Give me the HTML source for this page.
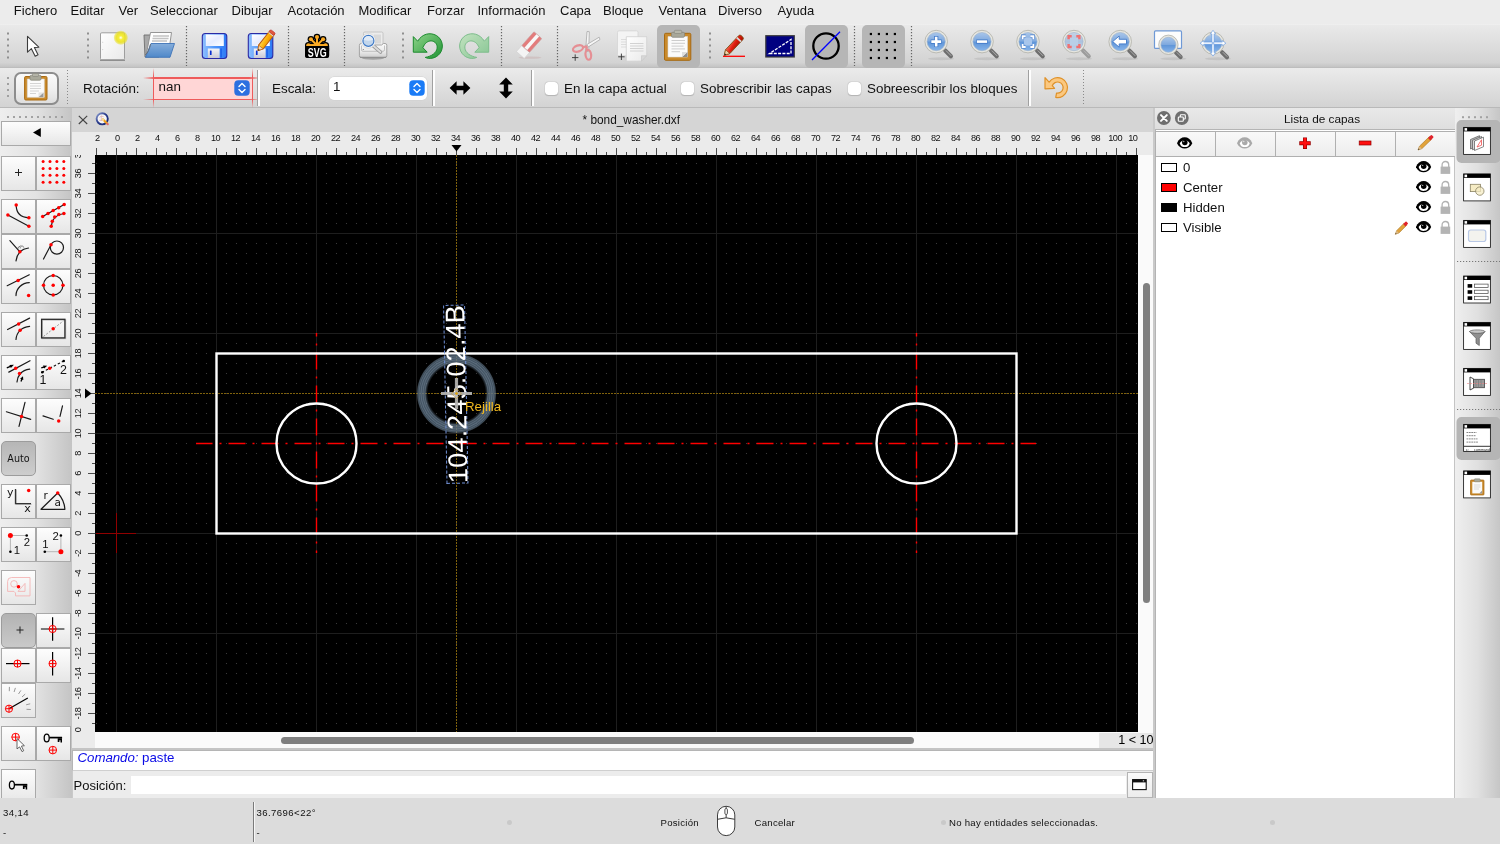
<!DOCTYPE html>
<html lang="es"><head><meta charset="utf-8"><title>bond_washer.dxf</title>
<style>
*{box-sizing:border-box;margin:0;padding:0}
html,body{width:1500px;height:844px;overflow:hidden;background:#dcdcdc;font-family:"Liberation Sans",sans-serif;font-size:13px;color:#000}
.abs{position:absolute}
div,span,svg{position:absolute}
#menubar{left:0;top:0;width:1500px;height:24px;background:#ececec}
#menubar span{top:2px;font-size:13px;line-height:17px;white-space:nowrap;color:#111}
#tb1{left:0;top:24px;width:1500px;height:44px;background:linear-gradient(#f1f1f1 0,#e9e9e9 1.500px,#d3d3d3 90%,#c4c4c4);border-bottom:1px solid #bdbdbd}
#tb2{left:0;top:68px;width:1500px;height:40px;background:linear-gradient(#ebebeb,#d3d3d3);border-bottom:1px solid #b9b9b9}
.vsep{width:1px;top:4px;height:36px;background:repeating-linear-gradient(#8a8a8a 0 1px,transparent 1px 3px)}
.hdl{width:2px;top:10px;height:26px;background:repeating-linear-gradient(transparent 0 4px,#a0a0a0 4px 6px)}
.pressed{background:#b5b5b5;border-radius:5px}
#leftdock{left:0;top:108px;width:72px;height:690px;background:linear-gradient(90deg,#eeeeee,#e2e2e2 50%,#c4c4c4)}
.lb{width:35px;height:35px;border:1px solid #a9a9a9;background:linear-gradient(#fdfdfd,#f3f3f3 45%,#e6e6e6);overflow:hidden}
.lb svg{left:-.4px;top:-.6px}
#mdi{left:72px;top:108px;width:1082px;height:24px;background:#d5d5d5}
#rulerh{left:72px;top:132px;width:1082px;height:23px;background:#ebebeb}
#rulerv{left:72px;top:155px;width:23px;height:577px;background:#ebebeb;overflow:hidden}
#canvas{left:95px;top:155px;width:1043px;height:577px;background:#000;overflow:hidden}
#vscroll{left:1138px;top:155px;width:16px;height:577px;background:#fafafa}
#hscroll{left:72px;top:732px;width:1082px;height:16px;background:#fafafa}
#cmdarea{left:72px;top:748px;width:1082px;height:50px;background:#e4e4e4}
#rpanel{left:1154px;top:108px;width:301px;height:690px;background:#fff}
#rtool{left:1455px;top:108px;width:45px;height:690px;background:linear-gradient(90deg,#efefef,#e0e0e0 50%,#c6c6c6)}
#status{left:0;top:798px;width:1500px;height:46px;background:#dcdcdc;font-size:9.6px}
.rl{top:0;width:31px;height:12px;line-height:12px;font-size:9.2px;text-align:center;letter-spacing:-0.5px;color:#111}
.rv{left:-9px;width:31px;height:31px;line-height:31px;font-size:9.2px;text-align:center;letter-spacing:-0.5px;color:#111;transform:rotate(-90deg)}
.t2{top:13.200px;font-size:13.4px;line-height:16px;white-space:nowrap;color:#111}
.cb{top:14px;width:13px;height:13px;background:#fff;border-radius:3.5px;box-shadow:0 0 1px rgba(0,0,0,.35),0 .5px 1px rgba(0,0,0,.15)}
.st{font-size:9.600px;line-height:12px;letter-spacing:.270px;white-space:nowrap;color:#111}
.sd{top:21.500px;width:5px;height:5px;border-radius:50%;background:#c9c9c9}
body>div{will-change:transform}

</style></head>
<body>
<!-- menubar -->
<div id="menubar">
<span style="left:13.800px">Fichero</span><span style="left:70.500px">Editar</span><span style="left:118.500px">Ver</span><span style="left:150px">Seleccionar</span><span style="left:231.500px">Dibujar</span><span style="left:287.500px">Acotación</span><span style="left:358.500px">Modificar</span><span style="left:427px">Forzar</span><span style="left:477.500px">Información</span><span style="left:560px">Capa</span><span style="left:603px">Bloque</span><span style="left:658.500px">Ventana</span><span style="left:718px">Diverso</span><span style="left:777.500px">Ayuda</span>
</div>

<!-- toolbar1 -->
<div id="tb1">
<svg width="1500" height="44" viewBox="0 24 1500 44" style="left:0;top:0">
<defs>
<linearGradient id="gpage" x1="0" y1="0" x2="1" y2="1"><stop offset="0" stop-color="#ffffff"/><stop offset="1" stop-color="#e9e9e9"/></linearGradient>
<radialGradient id="gglow"><stop offset="0" stop-color="#ffffff"/><stop offset=".28" stop-color="#f6ee3a"/><stop offset=".62" stop-color="#ebe224" stop-opacity=".92"/><stop offset=".85" stop-color="#e8df1e" stop-opacity=".55"/><stop offset="1" stop-color="#e8df1e" stop-opacity="0"/></radialGradient>
<linearGradient id="gfold" x1="0" y1="0" x2="0" y2="1"><stop offset="0" stop-color="#86aedb"/><stop offset="1" stop-color="#4f88c9"/></linearGradient>
<linearGradient id="gsave" x1="0" y1="0" x2="1" y2="0"><stop offset="0" stop-color="#8fc0ff"/><stop offset=".5" stop-color="#4f96fb"/><stop offset="1" stop-color="#2c7af5"/></linearGradient>
<linearGradient id="glabel" x1="0" y1="0" x2="1" y2="1"><stop offset="0" stop-color="#ffffff"/><stop offset=".5" stop-color="#e6ecff"/><stop offset="1" stop-color="#ffffff"/></linearGradient>
<linearGradient id="gshut" x1="0" y1="0" x2="0" y2="1"><stop offset="0" stop-color="#f4f4f8"/><stop offset="1" stop-color="#c9c9d4"/></linearGradient>
<linearGradient id="gundo" x1="0" y1="0" x2="1" y2="1"><stop offset="0" stop-color="#8fd48a"/><stop offset="1" stop-color="#1f9434"/></linearGradient>
<linearGradient id="gredo" x1="1" y1="0" x2="0" y2="1"><stop offset="0" stop-color="#c3e3c0"/><stop offset="1" stop-color="#86c593"/></linearGradient>
<linearGradient id="glens" x1="0" y1="0" x2="0" y2="1"><stop offset="0" stop-color="#a9c6ea"/><stop offset=".48" stop-color="#7fa9de"/><stop offset=".52" stop-color="#5f95d8"/><stop offset="1" stop-color="#86b4ea"/></linearGradient>
<linearGradient id="glensd" x1="0" y1="0" x2="0" y2="1"><stop offset="0" stop-color="#c5d3e6"/><stop offset=".5" stop-color="#adc2de"/><stop offset="1" stop-color="#bfd2ea"/></linearGradient>
<linearGradient id="gprn" x1="0" y1="0" x2="0" y2="1"><stop offset="0" stop-color="#fbfbfb"/><stop offset=".6" stop-color="#e9e9e9"/><stop offset="1" stop-color="#cdcdcd"/></linearGradient>
<linearGradient id="gpen" x1="0" y1="0" x2="1" y2="1"><stop offset="0" stop-color="#ffe36a"/><stop offset=".5" stop-color="#fdb40d"/><stop offset="1" stop-color="#e98a00"/></linearGradient>
<linearGradient id="gpenr" x1="0" y1="0" x2="1" y2="1"><stop offset="0" stop-color="#ff7a66"/><stop offset=".5" stop-color="#e0200f"/><stop offset="1" stop-color="#a80d00"/></linearGradient>
</defs>
<rect x="7" y="32.5" width="2" height="2" fill="#8f8f8f"/><rect x="7" y="38.5" width="2" height="2" fill="#8f8f8f"/><rect x="7" y="44.5" width="2" height="2" fill="#8f8f8f"/><rect x="7" y="50.5" width="2" height="2" fill="#8f8f8f"/><rect x="7" y="56.5" width="2" height="2" fill="#8f8f8f"/>
<rect x="87" y="32.5" width="2" height="2" fill="#8f8f8f"/><rect x="87" y="38.5" width="2" height="2" fill="#8f8f8f"/><rect x="87" y="44.5" width="2" height="2" fill="#8f8f8f"/><rect x="87" y="50.5" width="2" height="2" fill="#8f8f8f"/><rect x="87" y="56.5" width="2" height="2" fill="#8f8f8f"/>
<rect x="402" y="32.5" width="2" height="2" fill="#8f8f8f"/><rect x="402" y="38.5" width="2" height="2" fill="#8f8f8f"/><rect x="402" y="44.5" width="2" height="2" fill="#8f8f8f"/><rect x="402" y="50.5" width="2" height="2" fill="#8f8f8f"/><rect x="402" y="56.5" width="2" height="2" fill="#8f8f8f"/>
<rect x="709" y="32.5" width="2" height="2" fill="#8f8f8f"/><rect x="709" y="38.5" width="2" height="2" fill="#8f8f8f"/><rect x="709" y="44.5" width="2" height="2" fill="#8f8f8f"/><rect x="709" y="50.5" width="2" height="2" fill="#8f8f8f"/><rect x="709" y="56.5" width="2" height="2" fill="#8f8f8f"/>
<path d="M186.5 26V66" stroke="#666" stroke-width="1.2" stroke-dasharray="1.2 1.8"/>
<path d="M288.5 26V66" stroke="#666" stroke-width="1.2" stroke-dasharray="1.2 1.8"/>
<path d="M344.5 26V66" stroke="#666" stroke-width="1.2" stroke-dasharray="1.2 1.8"/>
<path d="M501.5 26V66" stroke="#666" stroke-width="1.2" stroke-dasharray="1.2 1.8"/>
<path d="M557.5 26V66" stroke="#666" stroke-width="1.2" stroke-dasharray="1.2 1.8"/>
<path d="M854.5 26V66" stroke="#666" stroke-width="1.2" stroke-dasharray="1.2 1.8"/>
<path d="M911.5 26V66" stroke="#666" stroke-width="1.2" stroke-dasharray="1.2 1.8"/>
<rect x="657" y="25" width="43" height="43" rx="5" fill="#b6b6b6"/>
<rect x="805" y="25" width="43" height="43" rx="5" fill="#b6b6b6"/>
<rect x="862" y="25" width="43" height="43" rx="5" fill="#b6b6b6"/>
<path d="M27.5 36.300V52.200L31.400 48.700L35.200 56.200L38 54.800L34.400 47.500L38.800 47.200Z" fill="#fff" stroke="#3c3c3c" stroke-width="1.100" stroke-linejoin="round"/>
<rect x="100.500" y="32.800" width="24" height="27" rx="1.200" fill="url(#gpage)" stroke="#9e9e9e" stroke-width="1"/><path d="M100 60.300h25" stroke="#8a8a8a" stroke-width="1.200"/><path d="M102.200 42.300h1M102.200 49.600h1" stroke="#c4c4c4" stroke-width=".8"/><circle cx="120.800" cy="37.700" r="7.400" fill="url(#gglow)"/>
<path d="M144 35h6l1 1.500h8V57h-14z" fill="#a9a9a9" stroke="#6e6e6e" stroke-width=".9" stroke-linejoin="round"/><path d="M150.500 32.500h21l-3 21h-22z" fill="#fdfdfd" stroke="#8a8a8a" stroke-width=".9" stroke-linejoin="round"/><path d="M153 36h16M152.500 38.500h16M152 41h15" stroke="#c2c2c2" stroke-width="1.600"/><path d="M151 43.500h23.500l-4.500 13.800h-24.500z" fill="url(#gfold)" stroke="#3f74b8" stroke-width=".9" stroke-linejoin="round"/><path d="M145 55c3-2 4.500-6 5.500-11" stroke="#6a6a6a" stroke-width=".8" fill="none"/>
<rect x="202.3" y="33.500" width="24.500" height="25" rx="3" fill="url(#gsave)" stroke="#2a2aa5" stroke-width="1.100"/><rect x="205.8" y="34.500" width="18" height="11.500" fill="url(#glabel)"/><rect x="207.8" y="48.500" width="11.800" height="9.500" fill="url(#gshut)"/><rect x="209.9" y="50.500" width="1.700" height="4.500" rx=".5" fill="#0a2fd0"/><rect x="220.3" y="48.500" width="1.600" height="9" fill="#1f63ea"/>
<rect x="248.3" y="33.500" width="24.500" height="25" rx="3" fill="url(#gsave)" stroke="#2a2aa5" stroke-width="1.100"/><rect x="251.8" y="34.500" width="18" height="11.500" fill="url(#glabel)"/><rect x="253.8" y="48.500" width="11.800" height="9.500" fill="url(#gshut)"/><rect x="255.9" y="50.500" width="1.700" height="4.500" rx=".5" fill="#0a2fd0"/><rect x="266.3" y="48.500" width="1.600" height="9" fill="#1f63ea"/>
<g transform="translate(258 50.700) rotate(-52) scale(1.05 1.35)"><path d="M0 0l4.500-2.200h17.500v4.400h-17.500z" fill="url(#gpen)" stroke="#b8560a" stroke-width=".7" stroke-linejoin="round"/><path d="M0 0l4.500-2.200v4.400z" fill="#f3d9b0" stroke="#b8560a" stroke-width=".5"/><path d="M0 0l1.600-.8v1.600z" fill="#333"/><path d="M19.500-2.200h1.200v4.400h-1.200z" fill="#d8d8d8"/><path d="M20.700-2.200h1.800a.8.800 0 0 1 .8.800v2.800a.8.800 0 0 1-.8.800h-1.800z" fill="#e2583d" stroke="#b33" stroke-width=".5"/></g>
<path d="M317 45.300L308.50 45.30" stroke="#000" stroke-width="4.400" stroke-linecap="round"/><circle cx="308.50" cy="45.30" r="3.300" fill="#000"/><path d="M317 45.300L310.92 39.22" stroke="#000" stroke-width="4.400" stroke-linecap="round"/><circle cx="310.92" cy="39.22" r="3.300" fill="#000"/><path d="M317 45.300L317.00 37.00" stroke="#000" stroke-width="4.400" stroke-linecap="round"/><circle cx="317.00" cy="37.00" r="3.300" fill="#000"/><path d="M317 45.300L323.08 39.22" stroke="#000" stroke-width="4.400" stroke-linecap="round"/><circle cx="323.08" cy="39.22" r="3.300" fill="#000"/><path d="M317 45.300L325.50 45.30" stroke="#000" stroke-width="4.400" stroke-linecap="round"/><circle cx="325.50" cy="45.30" r="3.300" fill="#000"/>
<rect x="305" y="42.800" width="24.100" height="15.300" rx="3" fill="#000"/>
<path d="M317 45.300L308.50 45.30" stroke="#fbab25" stroke-width="2" stroke-linecap="round"/><circle cx="308.50" cy="45.30" r="2.050" fill="#fbab25"/><path d="M317 45.300L310.92 39.22" stroke="#fbab25" stroke-width="2" stroke-linecap="round"/><circle cx="310.92" cy="39.22" r="2.050" fill="#fbab25"/><path d="M317 45.300L317.00 37.00" stroke="#fbab25" stroke-width="2" stroke-linecap="round"/><circle cx="317.00" cy="37.00" r="2.050" fill="#fbab25"/><path d="M317 45.300L323.08 39.22" stroke="#fbab25" stroke-width="2" stroke-linecap="round"/><circle cx="323.08" cy="39.22" r="2.050" fill="#fbab25"/><path d="M317 45.300L325.50 45.30" stroke="#fbab25" stroke-width="2" stroke-linecap="round"/><circle cx="325.50" cy="45.30" r="2.050" fill="#fbab25"/>
<circle cx="317" cy="45.300" r="2.600" fill="#fbab25"/>
<path d="M306.500 45.100h21" stroke="#fbab25" stroke-width="1.700"/>
<rect x="305" y="46" width="24.100" height="12.100" rx="2.500" fill="#000"/><rect x="305" y="46" width="24.100" height="5" fill="#000"/>
<text x="317.200" y="56.800" text-anchor="middle" font-family="Liberation Sans, sans-serif" font-weight="bold" font-size="12.800" fill="#fff" textLength="18.800" lengthAdjust="spacingAndGlyphs">SVG</text>
<ellipse cx="373" cy="58.200" rx="11" ry="1.600" fill="#777" fill-opacity=".55"/><rect x="363.500" y="32" width="19.500" height="14" rx="1.300" fill="#ececec" stroke="#bdbdbd" stroke-width=".8"/><rect x="374" y="34.500" width="7" height="9" fill="#d9d9d9"/><path d="M362 43.500h8l2 1.500h9.500l2-1.500h1.500q1.800 0 1.800 1.800v10.400q0 1.800-1.800 1.800h-23.800q-1.800 0-1.800-1.800v-10.400q0-1.800 1.800-1.800z" fill="url(#gprn)" stroke="#9c9c9c" stroke-width=".9"/><path d="M361.500 45.500v4.300q0 1.500 1.500 1.500h20q1.500 0 1.500-1.500v-4.300" fill="none" stroke="#b4b4b4" stroke-width=".8"/><circle cx="363.300" cy="49.500" r=".6" fill="#777"/><path d="M360 57.300h26" stroke="#8c8c8c" stroke-width="1"/><path d="M373.300 45.800l7.200 6.200" stroke="#9a9a9a" stroke-width="3.600" stroke-linecap="round"/><path d="M373.300 45.800l7.200 6.200" stroke="#dcdcdc" stroke-width="1.800" stroke-linecap="round"/><circle cx="368.400" cy="40.900" r="7.300" fill="#fafafa" stroke="#c8c8c8" stroke-width=".6"/><circle cx="368.400" cy="40.900" r="5.500" fill="#c2d6ec" stroke="#3f7ac6" stroke-width="1.200"/><path d="M363.600 39.800a4.900 4.900 0 0 1 9.600 0q-4.800 2-9.600 0z" fill="#e6eff9" fill-opacity=".85"/>
<path d="M413.300 36.600L413.300 52.200L427.200 52.200L422.900 47.700C424.500 43.300 427.800 40.800 431.200 40.900C435 41 437.600 44.300 437.100 48.200C436.500 52.600 432 56.300 425.200 57.400C429.500 59.400 436.300 58.500 440.100 53.200C444.200 47.400 442.600 39.200 436.400 35.500C430 31.900 422 33.900 417.700 41.200Z" fill="url(#gundo)" stroke="#1c8a2e" stroke-width="1" stroke-linejoin="round"/>
<g transform="translate(902 0) scale(-1 1)"><path d="M413.300 36.600L413.300 52.200L427.200 52.200L422.900 47.700C424.500 43.300 427.800 40.800 431.200 40.900C435 41 437.600 44.300 437.100 48.200C436.500 52.600 432 56.300 425.200 57.400C429.500 59.400 436.300 58.500 440.100 53.200C444.200 47.400 442.600 39.200 436.400 35.500C430 31.900 422 33.900 417.700 41.200Z" fill="url(#gredo)" stroke="#7dbd8c" stroke-width="1" stroke-linejoin="round"/></g>
<ellipse cx="530" cy="57.600" rx="11.500" ry="1.200" fill="#c9b4b4" fill-opacity=".6"/><g transform="translate(521 54.200) rotate(-48.500)"><rect x="-1" y="-5.200" width="8" height="10.400" fill="#f4f4f4" stroke="#cfcfcf" stroke-width=".6"/><rect x="7" y="-5.200" width="18.500" height="10.400" rx=".8" fill="#e37c7c"/><rect x="7" y="-1.700" width="18.500" height="3.600" fill="#f8f8f8"/><rect x="7" y="-5.200" width="18.500" height="10.400" rx=".8" fill="none" stroke="#c9a0a0" stroke-width=".6"/></g>
<path d="M587 31.500l2.300.2-.6 19.500-3.200.8z" fill="#f6f6f6" stroke="#a8a8a8" stroke-width=".8" stroke-linejoin="round"/><path d="M599.200 37.200l.8 2.300-11.500 7.300-1.700-2.200z" fill="#f6f6f6" stroke="#a8a8a8" stroke-width=".8" stroke-linejoin="round"/><ellipse cx="578" cy="48.500" rx="5.200" ry="3" transform="rotate(-18 578 48.500)" fill="none" stroke="#e58f94" stroke-width="2.200"/><ellipse cx="588.300" cy="54.800" rx="2.800" ry="5" transform="rotate(-8 588.300 54.800)" fill="none" stroke="#e58f94" stroke-width="2.200"/><path d="M582.500 47.500l4.500-1.500M586.500 50l.5-4" stroke="#e58f94" stroke-width="2.200"/><path d="M572 57.600h6.400M575.200 54.400v6.400" stroke="#333" stroke-width=".9"/>
<rect x="617.500" y="30.800" width="20.500" height="25" rx="1.500" fill="#f4f4f4" stroke="#d4d4d4" stroke-width=".8"/><path d="M621 39.500h6M621 42h6M621 44.500h6M621 47h6" stroke="#dcdcdc" stroke-width="1"/><path d="M626.300 36.700h20.400v19l-5.200 5.500h-15.200z" fill="url(#gpage)" stroke="#cfcfcf" stroke-width=".8" stroke-linejoin="round"/><path d="M646.700 55.700l-5.200 5.500v-5.500z" fill="#d8d8d8" stroke="#c4c4c4" stroke-width=".6"/><path d="M630 43.500h13.500M630 46h13.500M630 48.500h13.500M630 51h13.500" stroke="#d2d2d2" stroke-width="1"/><path d="M618.200 56.800h6.400M621.400 53.600v6.400" stroke="#333" stroke-width=".9"/>
<rect x="664.500" y="33.300" width="26.300" height="27" rx="1.200" fill="#c98a2c" stroke="#a76911" stroke-width="1"/><path d="M668 36.500h19.500v20.500h-19.500z" fill="#fbfbfb" stroke="#dadada" stroke-width=".6"/><path d="M687.500 52v5h-5.500z" fill="#8d8d8d"/><path d="M682 57l5.500-5h-5.500z" fill="#dedede"/><path d="M671.500 40.500h13.500M671.500 43.300h13.500M671.500 46.100h12M671.500 48.900h13.500M671.500 51.700h8.500" stroke="#cdcdcd" stroke-width="1"/><rect x="671.500" y="32.300" width="13" height="5" rx="1.200" fill="#a8a89a" stroke="#84847a" stroke-width=".7"/><rect x="674.300" y="30.300" width="7.400" height="3.200" rx="1" fill="#b7b7aa" stroke="#84847a" stroke-width=".6"/>
<path d="M723 56.300h22" stroke="#ff0000" stroke-width="1.300"/><g transform="translate(724.300 55.300) rotate(-47)"><path d="M0 0l5-2.900h19a2 2 0 0 1 2 2v1.800a2 2 0 0 1-2 2h-19z" fill="url(#gpenr)" stroke="#7a4a10" stroke-width=".8" stroke-linejoin="round"/><path d="M0 0l5-2.900v5.800z" fill="#f0d2a8" stroke="#7a4a10" stroke-width=".6"/><path d="M0 0l1.900-1.100v2.200z" fill="#222"/><path d="M20.500-2.900h1.800v5.800h-1.800z" fill="#d9d9d9"/></g>
<rect x="765.800" y="35.700" width="28.500" height="21.300" fill="#000080" stroke="#3c3c3c" stroke-width="1.200"/><path d="M769.500 53.500h21.500V39.500z" fill="none" stroke="#fff" stroke-width="1.300" stroke-dasharray="3 1.300"/>
<circle cx="826" cy="46" r="12.700" fill="none" stroke="#000" stroke-width="2.300"/><path d="M812 60L840 31.700" stroke="#0000ff" stroke-width="1.300"/>
<rect x="869.8" y="32.9" width="2.200" height="2.200" fill="#000"/><rect x="869.8" y="40.9" width="2.200" height="2.200" fill="#000"/><rect x="869.8" y="48.9" width="2.200" height="2.200" fill="#000"/><rect x="869.8" y="56.9" width="2.200" height="2.200" fill="#000"/><rect x="877.8" y="32.9" width="2.200" height="2.200" fill="#000"/><rect x="877.8" y="40.9" width="2.200" height="2.200" fill="#000"/><rect x="877.8" y="48.9" width="2.200" height="2.200" fill="#000"/><rect x="877.8" y="56.9" width="2.200" height="2.200" fill="#000"/><rect x="885.8" y="32.9" width="2.200" height="2.200" fill="#000"/><rect x="885.8" y="40.9" width="2.200" height="2.200" fill="#000"/><rect x="885.8" y="48.9" width="2.200" height="2.200" fill="#000"/><rect x="885.8" y="56.9" width="2.200" height="2.200" fill="#000"/><rect x="893.8" y="32.9" width="2.200" height="2.200" fill="#000"/><rect x="893.8" y="40.9" width="2.200" height="2.200" fill="#000"/><rect x="893.8" y="48.9" width="2.200" height="2.200" fill="#000"/><rect x="893.8" y="56.9" width="2.200" height="2.200" fill="#000"/>
<ellipse cx="941.2" cy="58.800" rx="13" ry="1.500" fill="#888" fill-opacity=".22"/><path d="M945.2 50.6l5.7 5.7" stroke="#6e6e6e" stroke-width="4.200" stroke-linecap="round"/><path d="M946.2 50.800000000000004l4.8 4.8" stroke="#b9b9b9" stroke-width="1" stroke-linecap="round" stroke-opacity=".8"/><circle cx="936.2" cy="41.6" r="11.3" fill="#e6e6e0" stroke="#a9a9a0" stroke-width=".7"/><circle cx="936.2" cy="41.6" r="9.100000000000001" fill="url(#glens)" stroke="#9ab0cb" stroke-width=".6"/><path d="M930.700 41.600h11M936.200 36.100v11" stroke="#3f78c8" stroke-width="4.200"/><path d="M931.300 41.600h9.800M936.200 36.700v9.800" stroke="#fff" stroke-width="2.600"/>
<ellipse cx="987" cy="58.800" rx="13" ry="1.500" fill="#888" fill-opacity=".22"/><path d="M991 50.6l5.7 5.7" stroke="#6e6e6e" stroke-width="4.200" stroke-linecap="round"/><path d="M992 50.800000000000004l4.8 4.8" stroke="#b9b9b9" stroke-width="1" stroke-linecap="round" stroke-opacity=".8"/><circle cx="982" cy="41.6" r="11.3" fill="#e6e6e0" stroke="#a9a9a0" stroke-width=".7"/><circle cx="982" cy="41.6" r="9.100000000000001" fill="url(#glens)" stroke="#9ab0cb" stroke-width=".6"/><path d="M976.300 41.600h11.400" stroke="#3f78c8" stroke-width="4.200"/><path d="M976.900 41.600h10.200" stroke="#fff" stroke-width="2.600"/>
<ellipse cx="1033" cy="58.800" rx="13" ry="1.500" fill="#888" fill-opacity=".22"/><path d="M1037 50.6l5.7 5.7" stroke="#6e6e6e" stroke-width="4.200" stroke-linecap="round"/><path d="M1038 50.800000000000004l4.8 4.8" stroke="#b9b9b9" stroke-width="1" stroke-linecap="round" stroke-opacity=".8"/><circle cx="1028" cy="41.6" r="11.3" fill="#e6e6e0" stroke="#a9a9a0" stroke-width=".7"/><circle cx="1028" cy="41.6" r="9.100000000000001" fill="url(#glens)" stroke="#9ab0cb" stroke-width=".6"/><rect x="1024" y="37.600" width="8" height="8" fill="#a8c6ec"/><path d="M1022.6 39.300000000000004V36.2H1025.7M1030.3 36.2H1033.4V39.300000000000004M1033.4 43.9V47.0H1030.3M1025.7 47.0H1022.6V43.9" fill="none" stroke="#3f78c8" stroke-width="3.2"/><path d="M1022.6 39.300000000000004V36.2H1025.7M1030.3 36.2H1033.4V39.300000000000004M1033.4 43.9V47.0H1030.3M1025.7 47.0H1022.6V43.9" fill="none" stroke="#fff" stroke-width="1.9"/>
<ellipse cx="1079" cy="58.800" rx="13" ry="1.500" fill="#888" fill-opacity=".22"/><path d="M1083 50.6l5.7 5.7" stroke="#9c9c9c" stroke-width="4.200" stroke-linecap="round"/><path d="M1084 50.800000000000004l4.8 4.8" stroke="#b9b9b9" stroke-width="1" stroke-linecap="round" stroke-opacity=".8"/><circle cx="1074" cy="41.6" r="11.3" fill="#e6e6e0" stroke="#a9a9a0" stroke-width=".7"/><circle cx="1074" cy="41.6" r="9.100000000000001" fill="url(#glensd)" stroke="#9ab0cb" stroke-width=".6"/><rect x="1070" y="37.600" width="8" height="8" fill="#b9cfe8"/><path d="M1068.6 39.300000000000004V36.2H1071.7M1076.3 36.2H1079.4V39.300000000000004M1079.4 43.9V47.0H1076.3M1071.7 47.0H1068.6V43.9" fill="none" stroke="#f07070" stroke-width="2.4"/>
<ellipse cx="1125.2" cy="58.800" rx="13" ry="1.500" fill="#888" fill-opacity=".22"/><path d="M1129.2 50.6l5.7 5.7" stroke="#6e6e6e" stroke-width="4.200" stroke-linecap="round"/><path d="M1130.2 50.800000000000004l4.8 4.8" stroke="#b9b9b9" stroke-width="1" stroke-linecap="round" stroke-opacity=".8"/><circle cx="1120.2" cy="41.6" r="11.3" fill="#e6e6e0" stroke="#a9a9a0" stroke-width=".7"/><circle cx="1120.2" cy="41.6" r="9.100000000000001" fill="url(#glens)" stroke="#9ab0cb" stroke-width=".6"/><path d="M1112.700 41.600l6.500-5.600v3.300h7.300v4.600h-7.300v3.300z" fill="#fff" stroke="#3f78c8" stroke-width=".9" stroke-linejoin="round"/>
<rect x="1154.500" y="30.900" width="27" height="17.500" rx="1" fill="#fdfdfd" stroke="#6f99d6" stroke-width="1.200"/>
<ellipse cx="1173.4" cy="58.800" rx="13" ry="1.500" fill="#888" fill-opacity=".22"/><path d="M1176.0 52.4l4.6 4.6" stroke="#6e6e6e" stroke-width="4.200" stroke-linecap="round"/><path d="M1177.0 52.6l3.6999999999999997 3.6999999999999997" stroke="#b9b9b9" stroke-width="1" stroke-linecap="round" stroke-opacity=".8"/><circle cx="1168.4" cy="44.8" r="9.7" fill="#e6e6e0" stroke="#a9a9a0" stroke-width=".7"/><circle cx="1168.4" cy="44.8" r="7.499999999999999" fill="url(#glens)" stroke="#9ab0cb" stroke-width=".6"/>
<ellipse cx="1218" cy="58.800" rx="13" ry="1.500" fill="#888" fill-opacity=".22"/><path d="M1222 52.2l5 5" stroke="#6e6e6e" stroke-width="4.200" stroke-linecap="round"/><path d="M1223 52.400000000000006l4.1 4.1" stroke="#b9b9b9" stroke-width="1" stroke-linecap="round" stroke-opacity=".8"/><circle cx="1213" cy="43.2" r="11" fill="#e6e6e0" stroke="#a9a9a0" stroke-width=".7"/><circle cx="1213" cy="43.2" r="8.8" fill="url(#glens)" stroke="#9ab0cb" stroke-width=".6"/>
<path d="M1213 30.300l2.700 3.600h-1.600v8.200h8.200v-1.600l3.600 2.700-3.600 2.700v-1.600h-8.200v8.200h1.600l-2.700 3.600-2.700-3.600h1.600v-8.200h-8.200v1.600l-3.600-2.700 3.600-2.700v1.600h8.200v-8.200h-1.600z" fill="#fff" stroke="#5a93e0" stroke-width=".6" stroke-linejoin="round"/><rect x="1211.700" y="41.900" width="2.600" height="2.600" fill="#9cbde9"/>
</svg></div>

<!-- toolbar2 -->
<div id="tb2">
<div class="hdl" style="left:7px;top:5px;height:26px"></div>
<div style="left:14px;top:4px;width:45px;height:33px;border:2px solid #8d8d8d;border-radius:7px;background:linear-gradient(#fafafa,#f0f0f0 50%,#dedede)"></div>
<svg width="28" height="30" viewBox="0 0 28 30" style="left:22px;top:4px">
<rect x="2.600" y="4.500" width="22.400" height="23.500" rx="1.200" fill="#c98a2c" stroke="#a96a12" stroke-width="1"/>
<path d="M5.300 7h17v18.300h-17z" fill="#fbfbfb" stroke="#d8d8d8" stroke-width=".6"/>
<path d="M21.5 20.5v4.500h-5z" fill="#9a9a9a"/><path d="M16.5 25l5-4.500h-5z" fill="#e4e4e4"/>
<path d="M8 11.500h11M8 14h11M8 16.500h11M8 19h9M8 21.500h6" stroke="#cfcfcf" stroke-width=".9"/>
<rect x="8" y="3.200" width="11" height="5" rx="1.200" fill="#a9a99b" stroke="#85857a" stroke-width=".7"/>
<rect x="10.5" y="1.500" width="6" height="3" rx="1" fill="#b4b4a8" stroke="#85857a" stroke-width=".6"/>
</svg>
<div class="vsep" style="left:67px;top:2px;height:35px"></div>
<span class="t2" style="left:83px">Rotación:</span>
<div style="left:153px;top:9px;width:99px;height:23px;background:#ffd6d6;border-radius:4px"></div>
<div style="left:143px;top:9px;width:118px;height:1.5px;background:linear-gradient(90deg,rgba(240,80,80,0),#ee5b5b 10%,#ee5b5b 90%,rgba(240,80,80,0))"></div>
<div style="left:143px;top:30.5px;width:118px;height:1.5px;background:linear-gradient(90deg,rgba(240,80,80,0),#ee5b5b 10%,#ee5b5b 90%,rgba(240,80,80,0))"></div>
<div style="left:152.5px;top:0;width:1.5px;height:40px;background:linear-gradient(rgba(240,80,80,0),#ee5b5b 20%,#ee5b5b 80%,rgba(240,80,80,0))"></div>
<div style="left:251.5px;top:0;width:1.5px;height:40px;background:linear-gradient(rgba(240,80,80,0),#ee5b5b 20%,#ee5b5b 80%,rgba(240,80,80,0))"></div>
<span class="t2" style="left:158.500px;top:11.300px">nan</span>
<svg width="16" height="16" viewBox="0 0 16 16" style="left:234px;top:12px"><rect x=".3" y=".3" width="15.4" height="15.4" rx="4" fill="#2d6fe0"/><path d="M5 6.500l3-3 3 3M5 9.500l3 3 3-3" stroke="#fff" stroke-width="1.400" fill="none" stroke-linecap="round" stroke-linejoin="round"/></svg>
<div style="left:257.3px;top:2px;width:.6px;height:36px;background:#a0a0a0"></div><div style="left:258px;top:2px;width:1.800px;height:36px;background:#fefefe"></div>
<span class="t2" style="left:272px">Escala:</span>
<div style="left:329px;top:9px;width:98px;height:23px;background:#fff;border-radius:5px;box-shadow:0 0 0 .5px #d0d0d0"></div>
<span class="t2" style="left:333px;top:11.300px">1</span>
<svg width="16" height="16" viewBox="0 0 16 16" style="left:409px;top:12px"><rect x=".3" y=".3" width="15.4" height="15.4" rx="4" fill="#1a7bf6"/><path d="M5 6.500l3-3 3 3M5 9.500l3 3 3-3" stroke="#fff" stroke-width="1.400" fill="none" stroke-linecap="round" stroke-linejoin="round"/></svg>
<div style="left:432.3px;top:2px;width:.6px;height:36px;background:#a0a0a0"></div><div style="left:433px;top:2px;width:1.800px;height:36px;background:#fefefe"></div>
<svg width="22" height="16" viewBox="0 0 22 16" style="left:449px;top:12px"><path d="M.6 8l7-6.800v4.600h6.800v-4.600l7 6.800-7 6.800v-4.600h-6.800v4.600z" fill="#000"/></svg>
<svg width="16" height="22" viewBox="0 0 16 22" style="left:498px;top:9px"><path d="M8 .6l6.800 7h-4.600v6.800h4.600l-6.800 7-6.800-7h4.600v-6.800h-4.600z" fill="#000"/></svg>
<div style="left:531.3px;top:2px;width:.6px;height:36px;background:#a0a0a0"></div><div style="left:532px;top:2px;width:1.800px;height:36px;background:#fefefe"></div>
<div class="cb" style="left:545px"></div><span class="t2" style="left:564px">En la capa actual</span>
<div class="cb" style="left:681px"></div><span class="t2" style="left:700px">Sobrescribir las capas</span>
<div class="cb" style="left:848px"></div><span class="t2" style="left:867px">Sobreescribir los bloques</span>
<div style="left:1028.3px;top:2px;width:.6px;height:36px;background:#a0a0a0"></div><div style="left:1029px;top:2px;width:1.800px;height:36px;background:#fefefe"></div>
<svg width="28" height="26" viewBox="0 0 28 26" style="left:1043px;top:8px"><path d="M2 1.600L2 12.800L11.600 12.300L9.240 9.680A5.600 5.600 0 1 1 13.530 17.110L12.760 21.450A10 10 0 1 0 6.110 6.150Z" fill="#fbc880" stroke="#df9128" stroke-width="1.200" stroke-linejoin="round"/></svg>
<div class="vsep" style="left:1083px;top:2px;height:35px"></div>
</div>

<!-- leftdock -->
<div id="leftdock">
<div style="left:7px;top:8px;width:58px;height:2px;background:repeating-linear-gradient(90deg,#a2a2a2 0 2px,transparent 2px 6px)"></div>
<div class="lb" style="left:1px;top:12.500px;width:70px;height:25px"><svg width="68" height="23" viewBox="0 0 68 23"><path d="M31 11.500l7.800-4.500v9z" fill="#000"/></svg></div>
<div class="lb" style="left:1px;top:48px;"><svg width="33" height="33" viewBox="0 0 33 33"><path d="M13 16.500h7M16.500 13v7" stroke="#222" stroke-width="1"/></svg></div>
<div class="lb" style="left:36px;top:48px;"><svg width="33" height="33" viewBox="0 0 33 33"><circle cx="6.1" cy="5.5" r="1.5" fill="#ff0000"/><circle cx="6.1" cy="12.4" r="1.5" fill="#ff0000"/><circle cx="6.1" cy="19.3" r="1.5" fill="#ff0000"/><circle cx="6.1" cy="26.200000000000003" r="1.5" fill="#ff0000"/><circle cx="13.0" cy="5.5" r="1.5" fill="#ff0000"/><circle cx="13.0" cy="12.4" r="1.5" fill="#ff0000"/><circle cx="13.0" cy="19.3" r="1.5" fill="#ff0000"/><circle cx="13.0" cy="26.200000000000003" r="1.5" fill="#ff0000"/><circle cx="19.9" cy="5.5" r="1.5" fill="#ff0000"/><circle cx="19.9" cy="12.4" r="1.5" fill="#ff0000"/><circle cx="19.9" cy="19.3" r="1.5" fill="#ff0000"/><circle cx="19.9" cy="26.200000000000003" r="1.5" fill="#ff0000"/><circle cx="26.800000000000004" cy="5.5" r="1.5" fill="#ff0000"/><circle cx="26.800000000000004" cy="12.4" r="1.5" fill="#ff0000"/><circle cx="26.800000000000004" cy="19.3" r="1.5" fill="#ff0000"/><circle cx="26.800000000000004" cy="26.200000000000003" r="1.5" fill="#ff0000"/></svg></div>
<div class="lb" style="left:1px;top:91px;"><svg width="33" height="33" viewBox="0 0 33 33"><path d="M14.200 6.100C14.200 14 19 18.500 26.900 18.800M5.900 16L26.900 27.200" stroke="#1a1a1a" stroke-width="1.200" fill="none" stroke-linecap="round"/><circle cx="14.2" cy="6.1" r="1.75" fill="#ff0000"/><circle cx="26.9" cy="18.8" r="1.75" fill="#ff0000"/><circle cx="5.9" cy="16" r="1.75" fill="#ff0000"/><circle cx="26.9" cy="27.2" r="1.75" fill="#ff0000"/></svg></div>
<div class="lb" style="left:36px;top:91px;"><svg width="33" height="33" viewBox="0 0 33 33"><path d="M5.700 17.500L27.200 5.600M14.200 27.200C15 20 19 15.500 26.900 14.500" stroke="#1a1a1a" stroke-width="1.200" fill="none" stroke-linecap="round"/><circle cx="5.7" cy="17.5" r="1.75" fill="#ff0000"/><circle cx="11" cy="14.6" r="1.75" fill="#ff0000"/><circle cx="16.2" cy="11.6" r="1.75" fill="#ff0000"/><circle cx="21.7" cy="8.8" r="1.75" fill="#ff0000"/><circle cx="27.2" cy="5.6" r="1.75" fill="#ff0000"/><circle cx="14.2" cy="27.2" r="1.75" fill="#ff0000"/><circle cx="15.3" cy="22.3" r="1.75" fill="#ff0000"/><circle cx="17.7" cy="18" r="1.75" fill="#ff0000"/><circle cx="21.9" cy="15.4" r="1.75" fill="#ff0000"/><circle cx="26.9" cy="14.5" r="1.75" fill="#ff0000"/></svg></div>
<div class="lb" style="left:1px;top:126px;"><svg width="33" height="33" viewBox="0 0 33 33"><path d="M7.900 6.600L17.900 17.800M17.900 17.800C20.500 15.500 23 14.500 26.500 14M17.900 17.800C15.500 20.500 14.500 23.500 14 26.800" stroke="#1a1a1a" stroke-width="1.200" fill="none" stroke-linecap="round"/><path d="M15.600 15.200a3.600 3.600 0 0 1 6.600-1.600" stroke="#444" stroke-width=".7" fill="none"/><circle cx="18.200" cy="13.800" r=".5" fill="#333"/><circle cx="17.9" cy="17.8" r="1.75" fill="#ff0000"/></svg></div>
<div class="lb" style="left:36px;top:126px;"><svg width="33" height="33" viewBox="0 0 33 33"><circle cx="19.900" cy="13.600" r="6.600" stroke="#1a1a1a" stroke-width="1.200" fill="none" stroke-linecap="round"/><path d="M14 10.800L6.500 25" stroke="#1a1a1a" stroke-width="1.200" fill="none" stroke-linecap="round"/><circle cx="14" cy="10.8" r="1.75" fill="#ff0000"/></svg></div>
<div class="lb" style="left:1px;top:161px;"><svg width="33" height="33" viewBox="0 0 33 33"><path d="M5.200 16.700L27.300 5.800M14 26.600C14 19.500 20 13.800 27.300 13.600" stroke="#1a1a1a" stroke-width="1.200" fill="none" stroke-linecap="round"/><circle cx="16.1" cy="11.4" r="1.75" fill="#ff0000"/><circle cx="26.6" cy="26.4" r="1.75" fill="#ff0000"/></svg></div>
<div class="lb" style="left:36px;top:161px;"><svg width="33" height="33" viewBox="0 0 33 33"><circle cx="16.200" cy="16.200" r="9.700" stroke="#1a1a1a" stroke-width="1.200" fill="none" stroke-linecap="round"/><circle cx="16.2" cy="16.2" r="1.75" fill="#ff0000"/><circle cx="16.2" cy="6.5" r="1.75" fill="#ff0000"/><circle cx="16.2" cy="26" r="1.75" fill="#ff0000"/><circle cx="6.5" cy="16.2" r="1.75" fill="#ff0000"/><circle cx="26" cy="16.2" r="1.75" fill="#ff0000"/></svg></div>
<div class="lb" style="left:1px;top:204px;"><svg width="33" height="33" viewBox="0 0 33 33"><path d="M5.600 17.500L27.600 6.100M14 27.500C14.500 20 20 15 27.600 14.400" stroke="#1a1a1a" stroke-width="1.200" fill="none" stroke-linecap="round"/><circle cx="16.6" cy="11.9" r="1.75" fill="#ff0000"/><circle cx="18.1" cy="18.2" r="1.75" fill="#ff0000"/></svg></div>
<div class="lb" style="left:36px;top:204px;"><svg width="33" height="33" viewBox="0 0 33 33"><rect x="5.300" y="8" width="23.300" height="18.600" fill="none" stroke="#bdbdbd" stroke-width="1.200"/><rect x="4.600" y="7.300" width="23.300" height="18.600" fill="none" stroke="#2a2a2a" stroke-width="1.300"/><path d="M6.500 24.500L26.500 8.800" stroke="#8a8a8a" stroke-width=".9" stroke-dasharray="2 1.500"/><circle cx="16.2" cy="16.8" r="1.75" fill="#ff0000"/></svg></div>
<div class="lb" style="left:1px;top:247px;"><svg width="33" height="33" viewBox="0 0 33 33"><path d="M6.800 17.100L28 5.700M15 26.900C15 22 19 15 27.700 14.200" stroke="#1a1a1a" stroke-width="1.200" fill="none" stroke-linecap="round"/><path d="M4.800 12.900L9 11.100" stroke="#000" stroke-width="1.300"/><path d="M11.900 9.800L7.400 9.900L8.900 13z" fill="#000"/><path d="M19 26.400L20 23.700" stroke="#000" stroke-width="1.300"/><path d="M21 21.200L18.100 23.800L21.300 25z" fill="#000"/><circle cx="13.7" cy="13.2" r="1.75" fill="#ff0000"/><circle cx="17.5" cy="18.6" r="1.75" fill="#ff0000"/></svg></div>
<div class="lb" style="left:36px;top:247px;"><svg width="33" height="33" viewBox="0 0 33 33"><path d="M4.800 17.400L26.700 6" stroke="#111" stroke-width="1.100" stroke-dasharray="2.500 2"/><circle cx="26.700" cy="6" r="1.300" fill="#000"/><circle cx="5.300" cy="17.300" r="1.300" fill="#000"/><path d="M4.300 12.900L7.500 11.800" stroke="#000" stroke-width="1.300"/><path d="M10.200 10.800L6 10.500L7.200 13.600z" fill="#000"/><circle cx="12.7" cy="13.2" r="1.75" fill="#ff0000"/><text x="26.5" y="19.3" text-anchor="middle" font-family="Liberation Sans, sans-serif" font-size="12.42" fill="#111">2</text><text x="6" y="28.8" text-anchor="middle" font-family="Liberation Sans, sans-serif" font-size="12.42" fill="#111">1</text></svg></div>
<div class="lb" style="left:1px;top:290px;"><svg width="33" height="33" viewBox="0 0 33 33"><path d="M4.400 13.800L28.700 21.400M23 4.400L17 28.300" stroke="#1a1a1a" stroke-width="1.200" fill="none" stroke-linecap="round"/><circle cx="19.5" cy="18.6" r="1.75" fill="#ff0000"/></svg></div>
<div class="lb" style="left:36px;top:290px;"><svg width="33" height="33" viewBox="0 0 33 33"><path d="M6 17.900L16.200 21.300M25.500 7.900L23 18.300" stroke="#1a1a1a" stroke-width="1.200" fill="none" stroke-linecap="round"/><circle cx="21.7" cy="22.9" r="1.75" fill="#ff0000"/></svg></div>
<div class="lb" style="left:1px;top:376px;"><svg width="33" height="33" viewBox="0 0 33 33"><path d="M14.200 5.700V20.300H29.700" stroke="#c4c4c4" stroke-width="1.200" fill="none"/><path d="M13.500 5V19.600H29" stroke="#333" stroke-width="1.300" fill="none"/><text x="8.2" y="12" text-anchor="middle" font-family="DejaVu Sans, sans-serif" font-size="11.00" fill="#111">y</text><text x="25.6" y="28.2" text-anchor="middle" font-family="DejaVu Sans, sans-serif" font-size="11.00" fill="#111">x</text><circle cx="26.7" cy="6.5" r="1.75" fill="#ff0000"/></svg></div>
<div class="lb" style="left:36px;top:376px;"><svg width="33" height="33" viewBox="0 0 33 33"><path d="M4 25.300L20.700 9M4 25.300H27.900M20.700 9C25.500 14 27.500 19 27.900 25.300" stroke="#1a1a1a" stroke-width="1.200" fill="none" stroke-linecap="round"/><text x="8.7" y="15.3" text-anchor="middle" font-family="DejaVu Sans, sans-serif" font-size="10.50" fill="#111">r</text><text x="20.7" y="22.3" text-anchor="middle" font-family="DejaVu Sans, sans-serif" font-size="10.50" fill="#111">a</text><circle cx="20.7" cy="9" r="1.75" fill="#ff0000"/></svg></div>
<div class="lb" style="left:1px;top:419px;"><svg width="33" height="33" viewBox="0 0 33 33"><path d="M8.400 24.700V8.500H24.700" stroke="#b5b5b5" stroke-width="1" fill="none"/><circle cx="24.700" cy="8.500" r="1.300" fill="#000"/><circle cx="8.400" cy="24.700" r="1.300" fill="#000"/><circle cx="8.4" cy="8.5" r="2.5" fill="#ff0000"/><text x="25" y="19.3" text-anchor="middle" font-family="Liberation Sans, sans-serif" font-size="11.34" fill="#111">2</text><text x="14.8" y="27.3" text-anchor="middle" font-family="Liberation Sans, sans-serif" font-size="11.34" fill="#111">1</text></svg></div>
<div class="lb" style="left:36px;top:419px;"><svg width="33" height="33" viewBox="0 0 33 33"><path d="M23.900 8.500V24.700H7.800" stroke="#b5b5b5" stroke-width="1" fill="none"/><circle cx="23.900" cy="8.500" r="1.300" fill="#000"/><circle cx="7.800" cy="24.700" r="1.300" fill="#000"/><circle cx="23.9" cy="24.7" r="2.5" fill="#ff0000"/><text x="18.7" y="13.3" text-anchor="middle" font-family="Liberation Sans, sans-serif" font-size="11.34" fill="#111">2</text><text x="8.3" y="21" text-anchor="middle" font-family="Liberation Sans, sans-serif" font-size="11.34" fill="#111">1</text></svg></div>
<div class="lb" style="left:1px;top:462px;"><svg width="33" height="33" viewBox="0 0 33 33"><path d="M9.500 7.500H28V25.900H13.500V23L12 21.400H5.600V11.500Q5.600 7.500 9.500 7.500z" fill="none" stroke="#f4b4b4" stroke-width=".9"/><circle cx="12" cy="13.900" r="3.300" fill="none" stroke="#f4b4b4" stroke-width=".9"/><path d="M23 13.400V21.400H16z" fill="none" stroke="#f4b4b4" stroke-width=".9"/><circle cx="16.5" cy="16.7" r="1.75" fill="#ff0000"/></svg></div>
<div class="lb" style="left:1px;top:505px;background:linear-gradient(#b3b3b3,#c9c9c9);border-radius:5px;border-color:#9c9c9c;"><svg width="33" height="33" viewBox="0 0 33 33"><path d="M14.500 17h7M18 13.500v7" stroke="#222" stroke-width="1"/></svg></div>
<div class="lb" style="left:36px;top:505px;"><svg width="33" height="33" viewBox="0 0 33 33"><path d="M3.900 16H27.400M15.600 4.300V27.800" stroke="#000" stroke-width="1.200"/><circle cx="15.6" cy="16" r="3.6" fill="none" stroke="#ff0000" stroke-width="1"/><path d="M12.0 16h7.2M15.6 12.4v7.2" stroke="#ff0000" stroke-width="1"/></svg></div>
<div class="lb" style="left:1px;top:540px;"><svg width="33" height="33" viewBox="0 0 33 33"><path d="M4 15.600H27.500" stroke="#000" stroke-width="1.200"/><circle cx="15.5" cy="15.6" r="3.6" fill="none" stroke="#ff0000" stroke-width="1"/><path d="M11.9 15.6h7.2M15.5 12.0v7.2" stroke="#ff0000" stroke-width="1"/></svg></div>
<div class="lb" style="left:36px;top:540px;"><svg width="33" height="33" viewBox="0 0 33 33"><path d="M15.600 3.900V27.600" stroke="#000" stroke-width="1.200"/><circle cx="15.6" cy="15.6" r="3.6" fill="none" stroke="#ff0000" stroke-width="1"/><path d="M12.0 15.6h7.2M15.6 12.0v7.2" stroke="#ff0000" stroke-width="1"/></svg></div>
<div class="lb" style="left:1px;top:575px;"><svg width="33" height="33" viewBox="0 0 33 33"><path d="M7.3 8.2L7.4 3.9M12.1 9.0L13.4 4.9M16.5 11.0L18.9 7.4M20.0 14.0L23.2 11.1M24.1 21.8L28.2 20.8M24.5 26.3L28.8 26.5" stroke="#9a9a9a" stroke-width="1"/><path d="M7 25.700L25.800 15" stroke="#000" stroke-width="1.200"/><circle cx="7" cy="25.7" r="3.6" fill="none" stroke="#ff0000" stroke-width="1"/><path d="M3.4 25.7h7.2M7 22.099999999999998v7.2" stroke="#ff0000" stroke-width="1"/></svg></div>
<div class="lb" style="left:1px;top:618px;"><svg width="33" height="33" viewBox="0 0 33 33"><circle cx="13.6" cy="11.1" r="3.8" fill="none" stroke="#ff0000" stroke-width="1"/><path d="M9.8 11.1h7.6M13.6 7.3v7.6" stroke="#ff0000" stroke-width="1"/><path d="M15 12.500V22.900L17.600 20.900L20 25.600L21.700 24.700L19.400 20.100L22.400 19.700Z" fill="#fff" stroke="#555" stroke-width=".9" stroke-linejoin="round"/></svg></div>
<div class="lb" style="left:36px;top:618px;"><svg width="33" height="33" viewBox="0 0 33 33"><ellipse cx="9.7" cy="12" rx="2.500" ry="3.900" fill="none" stroke="#000" stroke-width="1.300"/><path d="M12.299999999999999 11.6h12.800" stroke="#000" stroke-width="1.700"/><path d="M20.7 12.2h4.300v4.300h-1.500v-2.300h-1.100v1.700h-1.700z" fill="#000"/><circle cx="15.8" cy="24.1" r="3.8" fill="none" stroke="#ff0000" stroke-width="1"/><path d="M12.0 24.1h7.6M15.8 20.3v7.6" stroke="#ff0000" stroke-width="1"/></svg></div>
<div class="lb" style="left:1px;top:661px;"><svg width="33" height="33" viewBox="0 0 33 33"><ellipse cx="9.9" cy="16.1" rx="2.500" ry="3.900" fill="none" stroke="#000" stroke-width="1.300"/><path d="M12.5 15.700000000000001h12.800" stroke="#000" stroke-width="1.700"/><path d="M20.9 16.3h4.300v4.300h-1.500v-2.300h-1.100v1.700h-1.700z" fill="#000"/></svg></div>
<div class="lb" style="left:1px;top:333px;background:linear-gradient(#b6b6b6,#cdcdcd);border-radius:5px;border-color:#9c9c9c;font-family:'DejaVu Sans',sans-serif;font-size:9.600px;line-height:33px;text-align:center;color:#111">Auto</div>
</div>

<!-- mdi -->
<div id="mdi">
<svg width="40" height="24" viewBox="0 0 40 24" style="left:0;top:0"><defs><linearGradient id="gq" x1="0" y1="0" x2="1" y2="1"><stop offset="0" stop-color="#8fa1d3"/><stop offset=".45" stop-color="#2a3c8c"/><stop offset="1" stop-color="#1b2a74"/></linearGradient></defs><path d="M6.800 7.800L15.200 16M15.200 7.800L6.800 16" stroke="#454545" stroke-width="1.150" fill="none"/><circle cx="30.200" cy="10.800" r="5.600" fill="#f6f6f6" stroke="url(#gq)" stroke-width="1.900"/><path d="M27.500 9.500l1.800-1.400 2.300.6M27.300 12.200l2.600.4M29.300 7.800v5" stroke="#d9a0a0" stroke-width=".6" fill="none"/><path d="M30.800 11.300l4.300 4.300" stroke="#f0a21a" stroke-width="2.100" stroke-linecap="round"/><path d="M30.600 11.100l.8.800" stroke="#f6dfa0" stroke-width="1.600" stroke-linecap="round"/><path d="M35.300 15.800l.5.500" stroke="#e06a6a" stroke-width="2" stroke-linecap="round"/></svg>
<span style="left:510.500px;top:4.700px;font-size:11.850px;line-height:14px;white-space:nowrap;color:#111">* bond_washer.dxf</span>
</div>
<div id="rulerh"><div style="left:23px;top:0;width:1043px;height:23px;overflow:hidden">
<svg width="1043" height="23" viewBox="0 0 1043 23" style="left:0;top:0"><path d="M1.5 16V23M11.5 20V23M21.5 16V23M31.5 20V23M41.5 16V23M51.5 20V23M61.5 16V23M71.5 20V23M81.5 16V23M91.5 20V23M101.5 16V23M111.5 20V23M121.5 16V23M131.5 20V23M141.5 16V23M151.5 20V23M161.5 16V23M171.5 20V23M181.5 16V23M191.5 20V23M201.5 16V23M211.5 20V23M221.5 16V23M231.5 20V23M241.5 16V23M251.5 20V23M261.5 16V23M271.5 20V23M281.5 16V23M291.5 20V23M301.5 16V23M311.5 20V23M321.5 16V23M331.5 20V23M341.5 16V23M351.5 20V23M361.5 16V23M371.5 20V23M381.5 16V23M391.5 20V23M401.5 16V23M411.5 20V23M421.5 16V23M431.5 20V23M441.5 16V23M451.5 20V23M461.5 16V23M471.5 20V23M481.5 16V23M491.5 20V23M501.5 16V23M511.5 20V23M521.5 16V23M531.5 20V23M541.5 16V23M551.5 20V23M561.5 16V23M571.5 20V23M581.5 16V23M591.5 20V23M601.5 16V23M611.5 20V23M621.5 16V23M631.5 20V23M641.5 16V23M651.5 20V23M661.5 16V23M671.5 20V23M681.5 16V23M691.5 20V23M701.5 16V23M711.5 20V23M721.5 16V23M731.5 20V23M741.5 16V23M751.5 20V23M761.5 16V23M771.5 20V23M781.5 16V23M791.5 20V23M801.5 16V23M811.5 20V23M821.5 16V23M831.5 20V23M841.5 16V23M851.5 20V23M861.5 16V23M871.5 20V23M881.5 16V23M891.5 20V23M901.5 16V23M911.5 20V23M921.5 16V23M931.5 20V23M941.5 16V23M951.5 20V23M961.5 16V23M971.5 20V23M981.5 16V23M991.5 20V23M1001.5 16V23M1011.5 20V23M1021.5 16V23M1031.5 20V23M1041.5 16V23" stroke="#4c4c4c" stroke-width="1" fill="none"/><path d="M356.5 13h10l-5 6.5z" fill="#000"/></svg>
<span class="rl" style="left:-13.1px">2</span>
<span class="rl" style="left:6.9px">0</span>
<span class="rl" style="left:26.9px">2</span>
<span class="rl" style="left:46.9px">4</span>
<span class="rl" style="left:66.9px">6</span>
<span class="rl" style="left:86.9px">8</span>
<span class="rl" style="left:105px">10</span>
<span class="rl" style="left:125px">12</span>
<span class="rl" style="left:145px">14</span>
<span class="rl" style="left:165px">16</span>
<span class="rl" style="left:185px">18</span>
<span class="rl" style="left:205px">20</span>
<span class="rl" style="left:225px">22</span>
<span class="rl" style="left:245px">24</span>
<span class="rl" style="left:265px">26</span>
<span class="rl" style="left:285px">28</span>
<span class="rl" style="left:305px">30</span>
<span class="rl" style="left:325px">32</span>
<span class="rl" style="left:345px">34</span>
<span class="rl" style="left:365px">36</span>
<span class="rl" style="left:385px">38</span>
<span class="rl" style="left:405px">40</span>
<span class="rl" style="left:425px">42</span>
<span class="rl" style="left:445px">44</span>
<span class="rl" style="left:465px">46</span>
<span class="rl" style="left:485px">48</span>
<span class="rl" style="left:505px">50</span>
<span class="rl" style="left:525px">52</span>
<span class="rl" style="left:545px">54</span>
<span class="rl" style="left:565px">56</span>
<span class="rl" style="left:585px">58</span>
<span class="rl" style="left:605px">60</span>
<span class="rl" style="left:625px">62</span>
<span class="rl" style="left:645px">64</span>
<span class="rl" style="left:665px">66</span>
<span class="rl" style="left:685px">68</span>
<span class="rl" style="left:705px">70</span>
<span class="rl" style="left:725px">72</span>
<span class="rl" style="left:745px">74</span>
<span class="rl" style="left:765px">76</span>
<span class="rl" style="left:785px">78</span>
<span class="rl" style="left:805px">80</span>
<span class="rl" style="left:825px">82</span>
<span class="rl" style="left:845px">84</span>
<span class="rl" style="left:865px">86</span>
<span class="rl" style="left:885px">88</span>
<span class="rl" style="left:905px">90</span>
<span class="rl" style="left:925px">92</span>
<span class="rl" style="left:945px">94</span>
<span class="rl" style="left:965px">96</span>
<span class="rl" style="left:985px">98</span>
<span class="rl" style="left:1004.6px">100</span>
<span class="rl" style="left:1024.6px">102</span>
</div></div>
<div id="rulerv">
<svg width="23" height="577" viewBox="0 0 23 577" style="left:0;top:0"><path d="M20 568.5H23M16 558.5H23M20 548.5H23M16 538.5H23M20 528.5H23M16 518.5H23M20 508.5H23M16 498.5H23M20 488.5H23M16 478.5H23M20 468.5H23M16 458.5H23M20 448.5H23M16 438.5H23M20 428.5H23M16 418.5H23M20 408.5H23M16 398.5H23M20 388.5H23M16 378.5H23M20 368.5H23M16 358.5H23M20 348.5H23M16 338.5H23M20 328.5H23M16 318.5H23M20 308.5H23M16 298.5H23M20 288.5H23M16 278.5H23M20 268.5H23M16 258.5H23M20 248.5H23M16 238.5H23M20 228.5H23M16 218.5H23M20 208.5H23M16 198.5H23M20 188.5H23M16 178.5H23M20 168.5H23M16 158.5H23M20 148.5H23M16 138.5H23M20 128.5H23M16 118.5H23M20 108.5H23M16 98.5H23M20 88.5H23M16 78.5H23M20 68.5H23M16 58.5H23M20 48.5H23M16 38.5H23M20 28.5H23M16 18.5H23M20 8.5H23" stroke="#4c4c4c" stroke-width="1" fill="none"/><path d="M13 233.5v10l6.5 -5z" fill="#000"/></svg>
<span class="rv" style="top:563px">-20</span>
<span class="rv" style="top:543px">-18</span>
<span class="rv" style="top:523px">-16</span>
<span class="rv" style="top:503px">-14</span>
<span class="rv" style="top:483px">-12</span>
<span class="rv" style="top:463px">-10</span>
<span class="rv" style="top:443px">-8</span>
<span class="rv" style="top:423px">-6</span>
<span class="rv" style="top:403px">-4</span>
<span class="rv" style="top:383px">-2</span>
<span class="rv" style="top:363px">0</span>
<span class="rv" style="top:343px">2</span>
<span class="rv" style="top:323px">4</span>
<span class="rv" style="top:303px">6</span>
<span class="rv" style="top:283px">8</span>
<span class="rv" style="top:263px">10</span>
<span class="rv" style="top:243px">12</span>
<span class="rv" style="top:223px">14</span>
<span class="rv" style="top:203px">16</span>
<span class="rv" style="top:183px">18</span>
<span class="rv" style="top:163px">20</span>
<span class="rv" style="top:143px">22</span>
<span class="rv" style="top:123px">24</span>
<span class="rv" style="top:103px">26</span>
<span class="rv" style="top:83px">28</span>
<span class="rv" style="top:63px">30</span>
<span class="rv" style="top:43px">32</span>
<span class="rv" style="top:23px">34</span>
<span class="rv" style="top:3px">36</span>
<span class="rv" style="top:-17px">38</span>
</div>

<!-- canvas -->
<div id="canvas">
<svg width="1043" height="577" viewBox="0 0 1043 577" style="left:0;top:0">
<defs><pattern id="gd" x="1" y="8" width="10" height="10" patternUnits="userSpaceOnUse"><rect x="0" y="0" width="1" height="1" fill="#3b3b3b"/></pattern><radialGradient id="ring" cx="50%" cy="50%" r="50%"><stop offset="0.72" stop-color="#5d7387" stop-opacity="0"/><stop offset="0.79" stop-color="#5d7387" stop-opacity="0.8"/><stop offset="0.9" stop-color="#566b7e" stop-opacity="0.9"/><stop offset="0.965" stop-color="#4c6072" stop-opacity="0.8"/><stop offset="1" stop-color="#4c6072" stop-opacity="0"/></radialGradient></defs>
<rect width="1043" height="577" fill="url(#gd)"/>
<path d="M21.5 0V577M121.5 0V577M221.5 0V577M321.5 0V577M421.5 0V577M521.5 0V577M621.5 0V577M721.5 0V577M821.5 0V577M921.5 0V577M1021.5 0V577M0 478.5H1043M0 378.5H1043M0 278.5H1043M0 178.5H1043M0 78.5H1043" stroke="#1e1e1e" stroke-width="1" fill="none"/>
<path d="M1 378.5H41M21.5 358V398" stroke="#900000" stroke-width="1" fill="none"/>
<path d="M361.5 0V577M0 238.5H1043" stroke="#80620c" stroke-width="1" stroke-dasharray="2 1" fill="none"/>
<path d="M101 288.5H941" stroke="#ff0000" stroke-width="1.4" stroke-dasharray="2 7 17 7" stroke-dashoffset="9.5" fill="none"/>
<path d="M221.5 178V398M821.5 178V398" stroke="#ff0000" stroke-width="1.4" stroke-dasharray="2 7 17 7" stroke-dashoffset="22.5" fill="none"/>
<rect x="121.5" y="198.5" width="800" height="180" stroke="#fff" stroke-width="2.4" fill="none"/>
<circle cx="221.5" cy="288.5" r="40" stroke="#fff" stroke-width="2.4" fill="none"/>
<circle cx="821.5" cy="288.5" r="40" stroke="#fff" stroke-width="2.4" fill="none"/>
<circle cx="361.5" cy="238.5" r="40" fill="url(#ring)" opacity=".9"/>
<circle cx="361.5" cy="238.5" r="31.5" stroke="#b9c6d2" stroke-opacity="0.25" stroke-width="0.7" fill="none"/>
<circle cx="361.5" cy="238.5" r="33.5" stroke="#b9c6d2" stroke-opacity="0.3" stroke-width="0.7" fill="none"/>
<circle cx="361.5" cy="238.5" r="35.5" stroke="#b9c6d2" stroke-opacity="0.3" stroke-width="0.7" fill="none"/>
<circle cx="361.5" cy="238.5" r="37.5" stroke="#b9c6d2" stroke-opacity="0.3" stroke-width="0.7" fill="none"/>
<circle cx="361.5" cy="238.5" r="39" stroke="#b9c6d2" stroke-opacity="0.2" stroke-width="0.7" fill="none"/>
<g transform="translate(372.5 328) rotate(-91.1)"><rect x="0" y="-20.5" width="178" height="21" fill="none" stroke="#6f8fd6" stroke-width="1" stroke-dasharray="3 2"/><text x="0" y="0" font-family="Liberation Sans, sans-serif" font-size="27" fill="#fff" textLength="178" lengthAdjust="spacingAndGlyphs">104.245.02.4B</text></g>
<path d="M346.0 238.5H377.0M361.5 223.0V254.0" stroke="#b2b2b2" stroke-width="3.200" stroke-opacity="0.92" fill="none"/>
<circle cx="361.5" cy="238.5" r="1.300" fill="#e0a000"/><path d="M356.5 238.5L361.5 233.5L366.5 238.5L361.5 243.5Z" fill="none" stroke="#d89a10" stroke-width=".6" stroke-opacity=".8"/>
<text x="370" y="256" font-family="Liberation Sans, sans-serif" font-size="13.300" fill="#f2b91e">Rejilla</text>
</svg></div>
<div id="vscroll"><div style="left:5px;top:128px;width:7px;height:320px;border-radius:4px;background:#7f7f7f"></div></div>
<div id="hscroll"><div style="left:0;top:0;width:23px;height:16px;background:#ebebeb"></div><div style="left:209px;top:5px;width:633px;height:7px;border-radius:4px;background:#7f7f7f"></div><div style="left:1027px;top:1px;width:55px;height:15px;background:#e6e6e6;font-size:12.600px;line-height:15px;text-align:right;padding-right:.5px">1 &lt; 10</div></div>

<!-- rightpanel -->
<div id="rpanel">
<div style="left:0;top:0;width:301px;height:22px;background:linear-gradient(#e9e9e9,#dedede);border-bottom:1px solid #b4b4b4"></div>
<svg width="40" height="22" viewBox="0 0 40 22" style="left:0;top:0"><circle cx="9.900" cy="10" r="6.900" fill="#6f6f6f"/><path d="M7 7.100l5.800 5.800M12.800 7.100l-5.800 5.800" stroke="#fff" stroke-width="2" stroke-linecap="round"/><circle cx="27.800" cy="10" r="6.900" fill="#6f6f6f"/><rect x="26.300" y="6.800" width="5" height="4.200" rx=".8" fill="none" stroke="#fff" stroke-width="1.100"/><rect x="24.300" y="9" width="5" height="4.200" rx=".8" fill="#6f6f6f" stroke="#fff" stroke-width="1.100"/></svg>
<span style="left:0;top:4px;width:336px;text-align:center;font-size:11.800px;line-height:14px;color:#111;white-space:nowrap">Lista de capas</span>
<div style="left:0;top:22px;width:1.500px;height:668px;background:#b4b4b4"></div>
<div style="left:300px;top:48px;width:1px;height:642px;background:#c4c4c4"></div>
<div style="left:1px;top:22.500px;width:300px;height:26px;background:#b0b0b0"></div>
<div style="left:1.5px;top:23.500px;width:59px;height:24px;background:linear-gradient(#f9f9f9,#ededed)"></div>
<div style="left:61.5px;top:23.500px;width:59px;height:24px;background:linear-gradient(#f9f9f9,#ededed)"></div>
<div style="left:121.5px;top:23.500px;width:59px;height:24px;background:linear-gradient(#f9f9f9,#ededed)"></div>
<div style="left:181.5px;top:23.500px;width:59px;height:24px;background:linear-gradient(#f9f9f9,#ededed)"></div>
<div style="left:241.5px;top:23.500px;width:59px;height:24px;background:linear-gradient(#f9f9f9,#ededed)"></div>
<svg width="301" height="26" viewBox="0 0 301 26" style="left:0;top:22px"><g transform="translate(23.300 13)"><path d="M-.3 .2C1.200-3.800 4.300-5.700 7.400-5.700S13.400-3.800 15 .2C13.300 3.900 10.500 5.500 7.400 5.500S1.500 3.900-.3 .2z" fill="#000"/><path d="M2.400 .2C3.600-1.700 5.300-2.700 7.400-2.700s3.800 1 5 2.900C11.600 3.400 9.600 4.100 7.400 4.100S3.400 3.400 2.400 .2z" fill="#fff"/><circle cx="7.500" cy="-.5" r="2.750" fill="#000"/><circle cx="6.500" cy="-1.500" r=".65" fill="#fff" fill-opacity=".75"/></g><g transform="translate(83.300 13)"><path d="M-.3 .2C1.200-3.800 4.300-5.700 7.400-5.700S13.400-3.800 15 .2C13.300 3.900 10.500 5.500 7.400 5.500S1.500 3.900-.3 .2z" fill="#a9a9a9"/><path d="M2.400 .2C3.600-1.700 5.300-2.700 7.400-2.700s3.800 1 5 2.900C11.600 3.400 9.600 4.100 7.400 4.100S3.400 3.400 2.400 .2z" fill="#fff"/><circle cx="7.500" cy="-.5" r="2.750" fill="#a9a9a9"/><circle cx="6.500" cy="-1.500" r=".65" fill="#fff" fill-opacity=".75"/></g><path d="M145.300 13.200h11.400M151 7.500v11.400" stroke="#8e0000" stroke-width="4"/><path d="M145.900 13.200h10.200M151 8.100v10.200" stroke="#ff1010" stroke-width="2.800"/><rect x="205.200" y="11" width="11.800" height="4" fill="#ff1010" stroke="#8e0000" stroke-width=".7"/><g transform="translate(264 20) rotate(-44)"><path d="M0 0l3.800-1.700h13.800v3.400h-13.800z" fill="#e2a33a" stroke="#a8741d" stroke-width=".6"/><path d="M0 0l3.800-1.700v3.400z" fill="#d9b98a"/><path d="M0 0l1.400-.6v1.200z" fill="#333"/><path d="M15.500-1.700h4a.8.800 0 0 1 .8.800v1.800a.8.800 0 0 1-.8.800h-4z" fill="#e0242c"/></g></svg>
<div style="left:7px;top:55.1px;width:16px;height:8.900px;background:#fff;border:1px solid #000"></div>
<span style="left:29px;top:51.5px;font-size:13.200px;line-height:16px;white-space:nowrap;color:#111">0</span>
<svg width="40" height="16" viewBox="0 0 40 16" style="left:261.500px;top:51.0px"><g transform="translate(.2 7.800)"><path d="M-.3 .2C1.200-3.800 4.300-5.700 7.400-5.700S13.400-3.800 15 .2C13.300 3.900 10.500 5.500 7.400 5.500S1.500 3.900-.3 .2z" fill="#000"/><path d="M2.400 .2C3.600-1.700 5.300-2.700 7.400-2.700s3.800 1 5 2.900C11.600 3.400 9.600 4.100 7.400 4.100S3.400 3.400 2.400 .2z" fill="#fff"/><circle cx="7.500" cy="-.5" r="2.750" fill="#000"/><circle cx="6.500" cy="-1.500" r=".65" fill="#fff" fill-opacity=".75"/></g><g transform="translate(24.400 1.200)"><path d="M1.700 7V4.600a3.300 3.300 0 0 1 6.600 0V7" fill="none" stroke="#b2b2b2" stroke-width="1.300"/><rect x=".2" y="6.400" width="9.600" height="7.300" fill="#b4b4b4"/></g></svg>
<div style="left:7px;top:75.1px;width:16px;height:8.900px;background:#ff0000;border:1px solid #000"></div>
<span style="left:29px;top:71.5px;font-size:13.200px;line-height:16px;white-space:nowrap;color:#111">Center</span>
<svg width="40" height="16" viewBox="0 0 40 16" style="left:261.500px;top:71.0px"><g transform="translate(.2 7.800)"><path d="M-.3 .2C1.200-3.800 4.300-5.700 7.400-5.700S13.400-3.800 15 .2C13.300 3.900 10.500 5.500 7.400 5.500S1.500 3.900-.3 .2z" fill="#000"/><path d="M2.400 .2C3.600-1.700 5.300-2.700 7.400-2.700s3.800 1 5 2.900C11.600 3.400 9.600 4.100 7.400 4.100S3.400 3.400 2.400 .2z" fill="#fff"/><circle cx="7.500" cy="-.5" r="2.750" fill="#000"/><circle cx="6.500" cy="-1.500" r=".65" fill="#fff" fill-opacity=".75"/></g><g transform="translate(24.400 1.200)"><path d="M1.700 7V4.600a3.300 3.300 0 0 1 6.600 0V7" fill="none" stroke="#b2b2b2" stroke-width="1.300"/><rect x=".2" y="6.400" width="9.600" height="7.300" fill="#b4b4b4"/></g></svg>
<div style="left:7px;top:95.1px;width:16px;height:8.900px;background:#000;border:1px solid #000"></div>
<span style="left:29px;top:91.5px;font-size:13.200px;line-height:16px;white-space:nowrap;color:#111">Hidden</span>
<svg width="40" height="16" viewBox="0 0 40 16" style="left:261.500px;top:91.0px"><g transform="translate(.2 7.800)"><path d="M-.3 .2C1.200-3.800 4.300-5.700 7.400-5.700S13.400-3.800 15 .2C13.300 3.900 10.500 5.500 7.400 5.500S1.500 3.900-.3 .2z" fill="#000"/><path d="M2.400 .2C3.600-1.700 5.300-2.700 7.400-2.700s3.800 1 5 2.900C11.600 3.400 9.600 4.100 7.400 4.100S3.400 3.400 2.400 .2z" fill="#fff"/><circle cx="7.500" cy="-.5" r="2.750" fill="#000"/><circle cx="6.500" cy="-1.500" r=".65" fill="#fff" fill-opacity=".75"/></g><g transform="translate(24.400 1.200)"><path d="M1.700 7V4.600a3.300 3.300 0 0 1 6.600 0V7" fill="none" stroke="#b2b2b2" stroke-width="1.300"/><rect x=".2" y="6.400" width="9.600" height="7.300" fill="#b4b4b4"/></g></svg>
<div style="left:7px;top:115.1px;width:16px;height:8.900px;background:#fff;border:1px solid #000"></div>
<span style="left:29px;top:111.5px;font-size:13.200px;line-height:16px;white-space:nowrap;color:#111">Visible</span>
<svg width="40" height="16" viewBox="0 0 40 16" style="left:261.500px;top:111.0px"><g transform="translate(.2 7.800)"><path d="M-.3 .2C1.200-3.800 4.300-5.700 7.400-5.700S13.400-3.800 15 .2C13.300 3.900 10.500 5.500 7.400 5.500S1.500 3.900-.3 .2z" fill="#000"/><path d="M2.400 .2C3.600-1.700 5.300-2.700 7.400-2.700s3.800 1 5 2.900C11.600 3.400 9.600 4.100 7.400 4.100S3.400 3.400 2.400 .2z" fill="#fff"/><circle cx="7.500" cy="-.5" r="2.750" fill="#000"/><circle cx="6.500" cy="-1.500" r=".65" fill="#fff" fill-opacity=".75"/></g><g transform="translate(24.400 1.200)"><path d="M1.700 7V4.600a3.300 3.300 0 0 1 6.600 0V7" fill="none" stroke="#b2b2b2" stroke-width="1.300"/><rect x=".2" y="6.400" width="9.600" height="7.300" fill="#b4b4b4"/></g></svg>
<svg width="16" height="16" viewBox="0 0 16 16" style="left:240px;top:111.5px"><g transform="translate(1.300 14.300) rotate(-45)"><path d="M0 0l3.500-1.600h11v3.200h-11z" fill="#e2a33a" stroke="#a8741d" stroke-width=".6"/><path d="M0 0l3.500-1.600v3.200z" fill="#d9b98a"/><path d="M0 0l1.300-.6v1.200z" fill="#333"/><path d="M12.800-1.600h3.200a.8.800 0 0 1 .8.800v1.600a.8.800 0 0 1-.8.800h-3.200z" fill="#e0242c"/></g></svg>
</div>

<!-- righttoolbar -->
<div id="rtool">
<svg width="45" height="690" viewBox="1455 108 45 690" style="left:0;top:0">
<rect x="1462" y="116.200" width="2" height="2" fill="#a2a2a2"/>
<rect x="1468" y="116.200" width="2" height="2" fill="#a2a2a2"/>
<rect x="1474" y="116.200" width="2" height="2" fill="#a2a2a2"/>
<rect x="1480" y="116.200" width="2" height="2" fill="#a2a2a2"/>
<rect x="1486" y="116.200" width="2" height="2" fill="#a2a2a2"/>
<rect x="1456.500" y="120" width="44" height="43" rx="5" fill="#b5b5b5"/>
<rect x="1456.500" y="417" width="44" height="43" rx="5" fill="#b5b5b5"/>
<path d="M1457 261.5H1500" stroke="#777" stroke-width="1.200" stroke-dasharray="1.200 1.800"/>
<path d="M1457 409.5H1500" stroke="#777" stroke-width="1.200" stroke-dasharray="1.200 1.800"/>
<rect x="1463.600" y="127.4" width="26.800" height="27" fill="#fff" stroke="#1a1a1a" stroke-width=".85"/><rect x="1463.600" y="127.4" width="26.800" height="4" fill="#000"/><rect x="1464.500" y="128.1" width="2.600" height="2.600" fill="#fff"/>
<rect x="1463.600" y="173.9" width="26.800" height="27" fill="#fff" stroke="#1a1a1a" stroke-width=".85"/><rect x="1463.600" y="173.9" width="26.800" height="4" fill="#000"/><rect x="1464.500" y="174.6" width="2.600" height="2.600" fill="#fff"/>
<rect x="1463.600" y="220.4" width="26.800" height="27" fill="#fff" stroke="#1a1a1a" stroke-width=".85"/><rect x="1463.600" y="220.4" width="26.800" height="4" fill="#000"/><rect x="1464.500" y="221.1" width="2.600" height="2.600" fill="#fff"/>
<rect x="1463.600" y="276.0" width="26.800" height="27" fill="#fff" stroke="#1a1a1a" stroke-width=".85"/><rect x="1463.600" y="276.0" width="26.800" height="4" fill="#000"/><rect x="1464.500" y="276.70000000000005" width="2.600" height="2.600" fill="#fff"/>
<rect x="1463.600" y="322.4" width="26.800" height="27" fill="#fff" stroke="#1a1a1a" stroke-width=".85"/><rect x="1463.600" y="322.4" width="26.800" height="4" fill="#000"/><rect x="1464.500" y="323.1" width="2.600" height="2.600" fill="#fff"/>
<rect x="1463.600" y="368.4" width="26.800" height="27" fill="#fff" stroke="#1a1a1a" stroke-width=".85"/><rect x="1463.600" y="368.4" width="26.800" height="4" fill="#000"/><rect x="1464.500" y="369.1" width="2.600" height="2.600" fill="#fff"/>
<rect x="1463.600" y="424.4" width="26.800" height="27" fill="#fff" stroke="#1a1a1a" stroke-width=".85"/><rect x="1463.600" y="424.4" width="26.800" height="4" fill="#000"/><rect x="1464.500" y="425.1" width="2.600" height="2.600" fill="#fff"/>
<rect x="1463.600" y="470.9" width="26.800" height="27" fill="#fff" stroke="#1a1a1a" stroke-width=".85"/><rect x="1463.600" y="470.9" width="26.800" height="4" fill="#000"/><rect x="1464.500" y="471.6" width="2.600" height="2.600" fill="#fff"/>
<path d="M1470.500 139.5l9-3.800v9.500l-9 3.800z" fill="#b9b9b9" stroke="#555" stroke-width=".7"/><path d="M1472.500 140.3l9-3.800v9.500l-9 3.800z" fill="#d9d9d9" stroke="#555" stroke-width=".7"/><path d="M1474.500 141l9-3.800v9.500l-9 3.800z" fill="#fff" stroke="#555" stroke-width=".7"/><path d="M1477 147l4.500-7.300v5.500z" fill="none" stroke="#f05050" stroke-width=".8"/>
<rect x="1470.300" y="184.3" width="10.200" height="7.300" fill="#f6ecc4" stroke="#8a8262" stroke-width=".8"/><circle cx="1479.800" cy="191.1" r="4.200" fill="#f6ecc4" fill-opacity=".75" stroke="#8a8262" stroke-width=".8"/>
<rect x="1468.500" y="230" width="17.300" height="11.500" rx="2.200" fill="#f3f3ee" stroke="#b9c9e6" stroke-width="1.200"/>
<rect x="1467.600" y="284.1" width="4.600" height="3.600" fill="#000"/><rect x="1474.600" y="284.1" width="13.500" height="3.400" fill="#fff" stroke="#444" stroke-width=".7"/>
<rect x="1467.600" y="290.20000000000005" width="4.600" height="3.600" fill="#000"/><rect x="1474.600" y="290.20000000000005" width="13.500" height="3.400" fill="#fff" stroke="#444" stroke-width=".7"/>
<rect x="1467.600" y="296.3" width="4.600" height="3.600" fill="#000"/><rect x="1474.600" y="296.3" width="13.500" height="3.400" fill="#fff" stroke="#444" stroke-width=".7"/>
<path d="M1469.500 331.5h15.500l-5.700 6.800v7.200l-3.300-2.300v-4.900z" fill="#8f8f8f" stroke="#5a5a5a" stroke-width=".7" stroke-linejoin="round"/><ellipse cx="1477.250" cy="331.6" rx="7.700" ry="1.700" fill="#c9c9c9" stroke="#5a5a5a" stroke-width=".7"/>
<path d="M1470 377l3.500 1.800v9.400l-3.500 1.800z" fill="#fff" stroke="#333" stroke-width=".9"/><rect x="1473.500" y="379.3" width="11" height="8.400" fill="#9a9a9a" stroke="#444" stroke-width=".8"/><path d="M1476 379.3v8.400M1478.500 379.3v8.400M1481 379.3v8.400" stroke="#777" stroke-width=".6"/><path d="M1467 383.5h21" stroke="#f08080" stroke-width=".6" stroke-dasharray="2 1"/>
<path d="M1466.500 432.5h10M1466.500 435.7h9M1466.500 438.9h11M1466.500 442.1h11.500" stroke="#777" stroke-width=".9" stroke-dasharray="1.800 .6"/><path d="M1464 446.3h26.500" stroke="#000" stroke-width=".8"/><text x="1482" y="451" text-anchor="middle" font-family="Liberation Sans, sans-serif" font-size="3.600" fill="#222">command</text><text x="1467.500" y="451" text-anchor="middle" font-family="Liberation Sans, sans-serif" font-size="3.600" fill="#222">c:</text>
<rect x="1470.500" y="480.0" width="13.500" height="15" rx=".8" fill="#c98a2c" stroke="#a76911" stroke-width=".7"/><rect x="1472.300" y="481.8" width="9.900" height="11.600" fill="#fafafa"/><path d="M1474 485.0h6.500M1474 487.0h6.500M1474 489.0h5" stroke="#ccc" stroke-width=".7"/><rect x="1474.300" y="478.8" width="5.900" height="3" rx=".7" fill="#a8a89a" stroke="#84847a" stroke-width=".5"/><path d="M1482.200 490.5v2.900h-3z" fill="#999"/>
</svg></div>

<!-- cmd -->
<div id="cmdarea">
<div style="left:0;top:0;width:1082px;height:2px;background:#c4c4c4"></div>
<div style="left:0;top:1.500px;width:1082px;height:21.500px;background:#fff;border-top:1px solid #b5b5b5;border-left:1px solid #b5b5b5;border-bottom:1px solid #cfcfcf"></div>
<span style="left:5.500px;top:2.200px;font-size:13.300px;line-height:16px;white-space:nowrap;color:#0a0ae6;letter-spacing:-.050px"><i>Comando:</i> paste</span>
<div style="left:0;top:23px;width:1082px;height:27px;background:#ececec;border-left:1px solid #c9c9c9"></div>
<span style="left:1.500px;top:30px;font-size:13px;line-height:16px;white-space:nowrap;color:#111">Posición:</span>
<div style="left:59px;top:28px;width:995px;height:18px;background:#fff"></div>
<div style="left:1055px;top:24px;width:25.500px;height:25.500px;border:1px solid #b4b4b4;background:linear-gradient(#fbfbfb,#ececec)"></div>
<svg width="16" height="12" viewBox="0 0 16 12" style="left:1060px;top:31px"><rect x=".6" y=".6" width="13.600" height="10" fill="#fff" stroke="#111" stroke-width="1.100"/><rect x=".6" y=".6" width="13.600" height="2.800" fill="#111"/><rect x="10.800" y="1.300" width="1.300" height="1" fill="#ddd"/></svg>
</div>
<div style="left:1153px;top:108px;width:1.500px;height:690px;background:#c9c9c9"></div>

<!-- status -->
<div id="status">
<span class="st" style="left:3px;top:9px;letter-spacing:.420px">34,14</span>
<span class="st" style="left:3px;top:29px">-</span>
<div style="left:253px;top:4px;width:1px;height:40px;background:#7a7a7a"></div><div style="left:254px;top:4px;width:1px;height:40px;background:#f6f6f6"></div>
<span class="st" style="left:256.500px;top:9px;letter-spacing:.420px">36.7696&lt;22°</span>
<span class="st" style="left:256.500px;top:29px">-</span>
<div class="sd" style="left:506.500px"></div>
<span class="st" style="left:660.500px;top:18.500px">Posición</span>
<svg width="22" height="34" viewBox="0 0 22 34" style="left:715px;top:6px"><rect x="2.500" y="2.300" width="17.300" height="29.300" rx="8.600" fill="#fff" stroke="#3c3c3c" stroke-width="1"/><path d="M2.500 15.300Q11 12.300 19.800 15.300" fill="none" stroke="#3c3c3c" stroke-width="1"/><path d="M11.150 2.300v2.200M11.150 10.300v3.600" stroke="#3c3c3c" stroke-width="1"/><rect x="9.900" y="4.500" width="2.500" height="6" rx="1.200" fill="#fff" stroke="#3c3c3c" stroke-width=".9"/></svg>
<span class="st" style="left:754.500px;top:18.500px">Cancelar</span>
<div class="sd" style="left:941px"></div>
<span class="st" style="left:949px;top:18.500px">No hay entidades seleccionadas.</span>
<div class="sd" style="left:1270px"></div>
</div>

</body></html>
